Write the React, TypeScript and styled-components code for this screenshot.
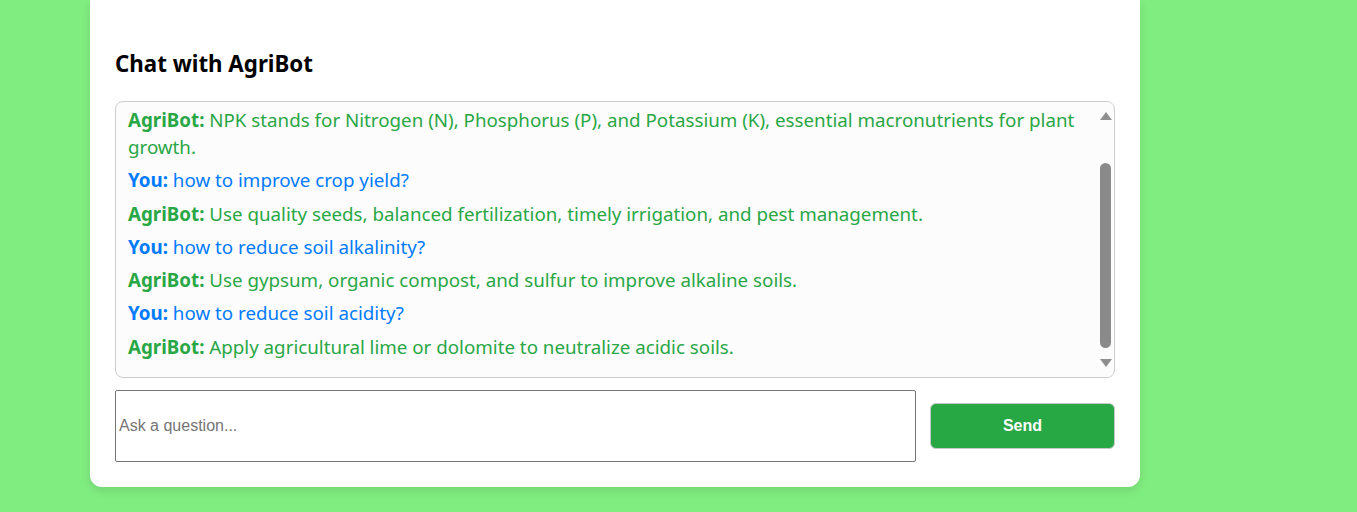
import React from "react";
import styled, { createGlobalStyle } from "styled-components";

const GlobalStyle = createGlobalStyle`
  html, body { margin: 0; padding: 0; background: #80ed80; }
  body { font-family: "Noto Sans", "Open Sans", sans-serif; }
`;

const Page = styled.div`
  display: flex;
  padding-left: 90px;
  min-height: 512px;
  box-sizing: border-box;
`;

const Card = styled.section`
  width: 1050px;
  box-sizing: border-box;
  background: #ffffff;
  border-radius: 0 0 12px 12px;
  box-shadow: 0 4px 10px rgba(0, 0, 0, 0.1);
  padding: 25px;
  align-self: flex-start;
  display: flex;
  flex-direction: column;
`;

const Title = styled.h3`
  margin: 25px 0 24px;
  font-family: "Noto Sans", sans-serif;
  font-size: 22.3px;
  line-height: 27px;
  font-weight: 700;
  color: #000;
`;

const ChatFrame = styled.div`
  position: relative;
  height: 277px;
  box-sizing: border-box;
  border: 1px solid #cccccc;
  border-radius: 8px;
  background: #fcfcfc;
  overflow: hidden;
`;

const ChatLog = styled.div`
  height: 100%;
  box-sizing: border-box;
  overflow-y: auto;
  padding: 4px 27px 10px 12px;
  scrollbar-width: none;
  &::-webkit-scrollbar {
    display: none;
  }
`;

const ScrollRail = styled.div`
  position: absolute;
  top: 0;
  right: 1px;
  bottom: 0;
  width: 15px;
  display: flex;
  flex-direction: column;
  align-items: center;
  background: #fcfcfc;
`;

const ArrowUp = styled.span`
  margin-top: 10px;
  width: 0;
  height: 0;
  border-left: 6px solid transparent;
  border-right: 6px solid transparent;
  border-bottom: 8px solid #8f8f8f;
`;

const ArrowDown = styled.span`
  margin-top: auto;
  margin-bottom: 10px;
  width: 0;
  height: 0;
  border-left: 6px solid transparent;
  border-right: 6px solid transparent;
  border-top: 8px solid #8f8f8f;
`;

const Thumb = styled.span`
  margin-top: 43px;
  width: 11px;
  height: 185px;
  border-radius: 6px;
  background: #8a8a8a;
`;

const Message = styled.div<{ $who: "bot" | "user" }>`
  margin: 0 0 6.3px;
  font-size: 18.75px;
  line-height: 27px;
  color: ${(p) => (p.$who === "bot" ? "#28a745" : "#007bff")};
`;

const Label = styled.strong`
  font-weight: 700;
`;

const InputRow = styled.div`
  display: flex;
  align-items: center;
  gap: 14px;
  margin-top: 12px;
`;

const QuestionInput = styled.input`
  flex: 1;
  height: 72px;
  box-sizing: border-box;
  border: 1px solid #767676;
  border-radius: 2px;
  padding: 1px 3px;
  font-family: "Liberation Sans", Arial, sans-serif;
  font-size: 16px;
  color: #000;
  background: #fff;
  outline: none;
  &::placeholder {
    color: #757575;
  }
`;

const SendButton = styled.button`
  width: 185px;
  height: 46px;
  box-sizing: border-box;
  border: 1px solid #c8c8c8;
  border-radius: 6px;
  background: #28a745;
  color: #ffffff;
  font-family: "Liberation Sans", Arial, sans-serif;
  font-size: 16px;
  font-weight: 700;
  cursor: pointer;
`;

type Msg = { who: "bot" | "user"; text: string };

const messages: Msg[] = [
  {
    who: "bot",
    text: "NPK stands for Nitrogen (N), Phosphorus (P), and Potassium (K), essential macronutrients for plant growth.",
  },
  { who: "user", text: "how to improve crop yield?" },
  {
    who: "bot",
    text: "Use quality seeds, balanced fertilization, timely irrigation, and pest management.",
  },
  { who: "user", text: "how to reduce soil alkalinity?" },
  { who: "bot", text: "Use gypsum, organic compost, and sulfur to improve alkaline soils." },
  { who: "user", text: "how to reduce soil acidity?" },
  { who: "bot", text: "Apply agricultural lime or dolomite to neutralize acidic soils." },
];

export default function App() {
  return (
    <>
      <GlobalStyle />
      <Page>
        <Card>
          <Title>Chat with AgriBot</Title>
          <ChatFrame>
            <ChatLog>
              {messages.map((m, i) => (
                <Message key={i} $who={m.who}>
                  <Label>{m.who === "bot" ? "AgriBot:" : "You:"}</Label> {m.text}
                </Message>
              ))}
            </ChatLog>
            <ScrollRail aria-hidden="true">
              <ArrowUp />
              <Thumb />
              <ArrowDown />
            </ScrollRail>
          </ChatFrame>
          <InputRow>
            <QuestionInput type="text" placeholder="Ask a question..." />
            <SendButton>Send</SendButton>
          </InputRow>
        </Card>
      </Page>
    </>
  );
}
